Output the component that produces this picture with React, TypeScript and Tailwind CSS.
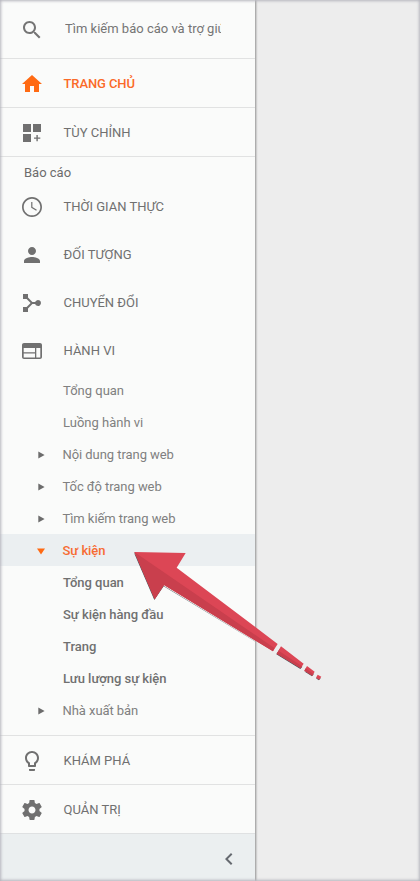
import type { ReactNode } from "react";

function Icon({ children, className = "" }: { children: ReactNode; className?: string }) {
  return (
    <svg viewBox="0 0 24 24" fill="currentColor" className={`size-6 shrink-0 ${className}`}>
      {children}
    </svg>
  );
}

const paths = {
  search:
    "M15.5 14h-.79l-.28-.27C15.41 12.59 16 11.11 16 9.5 16 5.91 13.09 3 9.5 3S3 5.91 3 9.5 5.91 16 9.5 16c1.61 0 3.09-.59 4.23-1.57l.27.28v.79l5 4.99L20.49 19l-4.99-5zm-6 0C7.01 14 5 11.99 5 9.5S7.01 5 9.5 5 14 7.01 14 9.5 11.99 14 9.5 14z",
  home: "M10 20v-6h4v6h5v-8h3L12 3 2 12h3v8z",
  custom: "M3 3h8v8H3zM13 3h8v8h-8zM3 13h8v8H3zM16.4 14h1.4v2.4h2.5v1.4h-2.5v2.5h-1.4v-2.5H14v-1.4h2.4z",
  clock:
    "M11.99 2C6.47 2 2 6.48 2 12s4.47 10 9.99 10C17.52 22 22 17.52 22 12S17.52 2 11.99 2zM12 20.3c-4.58 0-8.3-3.72-8.3-8.3s3.72-8.3 8.3-8.3 8.3 3.72 8.3 8.3-3.72 8.3-8.3 8.3zM12.4 7H11.2v5.8l5 3 .65-1.05-4.45-2.65z",
  person:
    "M12 12c2.21 0 4-1.79 4-4s-1.79-4-4-4-4 1.79-4 4 1.79 4 4 4zm0 2c-2.67 0-8 1.34-8 4v2h16v-2c0-2.66-5.33-4-8-4z",
  conversion:
    "M3 3h5v3.6l4.4 4.4h2.75a3 3 0 1 1 0 2H12.4L8 17.4V21H3v-5h3.6l4-4-4-4H3z",
  web: "M20 4H4c-1.1 0-2 .9-2 2v12c0 1.1.9 2 2 2h16c1.1 0 2-.9 2-2V6c0-1.1-.9-2-2-2zM15 18.5H3.7v-4H15v4zM15 13.2H3.7V9H15v4.2zM20.3 18.5h-4V9h4v9.5z",
  bulb: "M9 21c0 .55.45 1 1 1h4c.55 0 1-.45 1-1v-1H9v1zm3-19C8.14 2 5 5.14 5 9c0 2.38 1.19 4.47 3 5.74V17c0 .55.45 1 1 1h6c.55 0 1-.45 1-1v-2.26c1.81-1.27 3-3.36 3-5.74 0-3.86-3.14-7-7-7zm2.85 11.1l-.85.6V16h-4v-2.3l-.85-.6C7.8 12.16 7 10.63 7 9c0-2.76 2.24-5 5-5s5 2.24 5 5c0 1.63-.8 3.16-2.15 4.1z",
  gear: "M19.43 12.98c.04-.32.07-.64.07-.98s-.03-.66-.07-.98l2.11-1.65c.19-.15.24-.42.12-.64l-2-3.46c-.12-.22-.39-.3-.61-.22l-2.49 1c-.52-.4-1.08-.73-1.69-.98l-.38-2.65C14.46 2.18 14.25 2 14 2h-4c-.25 0-.46.18-.49.42l-.38 2.65c-.61.25-1.17.59-1.69.98l-2.49-1c-.23-.09-.49 0-.61.22l-2 3.46c-.13.22-.07.49.12.64l2.11 1.65c-.04.32-.07.65-.07.98s.03.66.07.98l-2.11 1.65c-.19.15-.24.42-.12.64l2 3.46c.12.22.39.3.61.22l2.49-1c.52.4 1.08.73 1.69.98l.38 2.65c.03.24.24.42.49.42h4c.25 0 .46-.18.49-.42l.38-2.65c.61-.25 1.17-.59 1.69-.98l2.49 1c.23.09.49 0 .61-.22l2-3.46c.12-.22.07-.49-.12-.64l-2.11-1.65zM12 15.5c-1.93 0-3.5-1.57-3.5-3.5s1.57-3.5 3.5-3.5 3.5 1.57 3.5 3.5-1.57 3.5-3.5 3.5z",
  left: "M15.41 7.41L14 6l-6 6 6 6 1.41-1.41L10.83 12z",
};

type IconName = keyof typeof paths;

function MainRow({
  icon,
  label,
  active = false,
  boxed = false,
}: {
  icon: IconName;
  label: string;
  active?: boolean;
  boxed?: boolean;
}) {
  return (
    <div
      className={`flex h-12 shrink-0 items-center pl-5 ${boxed ? "pt-0.5" : ""} ${active ? "text-[#fa6a28]" : "text-[#707070]"}`}
    >
      <Icon className={active ? "text-[#ff6a13]" : ""}>
        <path fillRule="evenodd" d={paths[icon]} />
      </Icon>
      <span
        className={`ml-[19.5px] text-[13px] leading-6 ${active ? "font-medium tracking-[-0.1px]" : "font-normal"}`}
      >
        {label}
      </span>
    </div>
  );
}

type Sub = { label: string; kind: "plain" | "closed" | "open" | "child" };

const subs: Sub[] = [
  { label: "Tổng quan", kind: "plain" },
  { label: "Luồng hành vi", kind: "plain" },
  { label: "Nội dung trang web", kind: "closed" },
  { label: "Tốc độ trang web", kind: "closed" },
  { label: "Tìm kiếm trang web", kind: "closed" },
  { label: "Sự kiện", kind: "open" },
  { label: "Tổng quan", kind: "child" },
  { label: "Sự kiện hàng đầu", kind: "child" },
  { label: "Trang", kind: "child" },
  { label: "Lưu lượng sự kiện", kind: "child" },
  { label: "Nhà xuất bản", kind: "closed" },
];

const subStyle = {
  plain: "text-[#808080]",
  closed: "text-[#808080] tracking-[-0.06px]",
  open: "bg-[#ebeff1] font-medium text-[#f76b33] tracking-[-0.06px]",
  child: "font-medium text-[#707070] tracking-[-0.03px]",
};

function SubRow({ label, kind }: Sub) {
  return (
    <div className={`flex h-8 shrink-0 items-center text-[13px] ${subStyle[kind]}`}>
      <div className={`flex shrink-0 pl-[37px] ${kind === "closed" || kind === "open" ? "w-[62.5px]" : "w-[63px]"}`}>
        {kind === "closed" && (
          <svg viewBox="0 0 8 8" className="mt-px size-2 fill-[#6c6c6c]">
            <path d="M1.3 .5 7.6 4 1.3 7.5z" />
          </svg>
        )}
        {kind === "open" && (
          <svg viewBox="0 0 8 7" className="mt-[3px] h-[7px] w-2 fill-[#ff6a13]">
            <path d="M0 .5h8L4 6.5z" />
          </svg>
        )}
      </div>
      <span className="pt-px">{label}</span>
    </div>
  );
}

function Arrow() {
  return (
    <svg viewBox="0 0 220 160" className="absolute top-[530px] left-[120px] h-[160px] w-[220px]">
      <g transform="scale(.33333)">
        <g fill="#4b5157" transform="translate(-1 2)">
          <path d="M43 66 104 208 132 167 459 364 132 165z" />
          <path d="M470 371 542 415 548 408 480 355zM553 422 577 437 583 429zM588 443 598 449 603 442z" />
        </g>
        <path fill="#dc4655" d="M43 66 197 69 170 113 473 342 459 364 132 165 104 208z" />
        <path fill="#c93f4d" d="M43 66 463 354 459 364 132 165 104 208z" />
        <path fill="#dc4655" d="M483 349 551 401 542 415 470 371zM561 408 584 425 577 437 553 422zM593 434 604 440 598 449 588 443z" />
        <path fill="#c93f4d" d="M476 362 546 409 542 415 470 371zM557 415 580 432 577 437 553 422z" />
      </g>
    </svg>
  );
}

export default function App() {
  return (
    <div className="relative flex h-[881px] w-[420px] overflow-hidden bg-[#ededed] font-[Roboto,sans-serif]">
      <aside className="flex w-[255px] flex-col bg-[#fafbfa] shadow-[1px_0_2px_rgba(0,0,0,0.4)]">
        <div className="flex h-[58px] shrink-0 items-center pt-0.5 pl-5 text-[#757575]">
          <Icon>
            <path d={paths.search} />
          </Icon>
          <span className="mb-0.5 ml-[21px] w-[156px] overflow-hidden text-[13px] leading-6 whitespace-nowrap">
            Tìm kiếm báo cáo và trợ giúp
          </span>
        </div>
        <div className="border-y border-[#e1e2e2]">
          <MainRow icon="home" label="TRANG CHỦ" active boxed />
        </div>
        <div className="border-b border-[#e1e2e2]">
          <MainRow icon="custom" label="TÙY CHỈNH" boxed />
        </div>
        <div className="h-[26px] shrink-0 pt-1 pl-6 text-[13px] leading-6 text-[#6c6c6c]">Báo cáo</div>
        <MainRow icon="clock" label="THỜI GIAN THỰC" />
        <MainRow icon="person" label="ĐỐI TƯỢNG" />
        <MainRow icon="conversion" label="CHUYỂN ĐỔI" />
        <MainRow icon="web" label="HÀNH VI" />
        <div className="-mt-px flex h-[361px] shrink-0 flex-col">
          {subs.map((s, i) => (
            <SubRow key={i} {...s} />
          ))}
        </div>
        <div className="border-y border-[#e1e2e2]">
          <MainRow icon="bulb" label="KHÁM PHÁ" boxed />
        </div>
        <div className="border-b border-[#dfe1e2]">
          <MainRow icon="gear" label="QUẢN TRỊ" boxed />
        </div>
        <div className="flex flex-1 items-center justify-end bg-[#ebeff0] pt-0.5 pr-3.5 text-[#666a70]">
          <Icon>
            <path d={paths.left} />
          </Icon>
        </div>
      </aside>
      <Arrow />
      <div className="pointer-events-none absolute inset-0 shadow-[inset_0_0_3px_1px_#b4b4bc]" />
    </div>
  );
}
